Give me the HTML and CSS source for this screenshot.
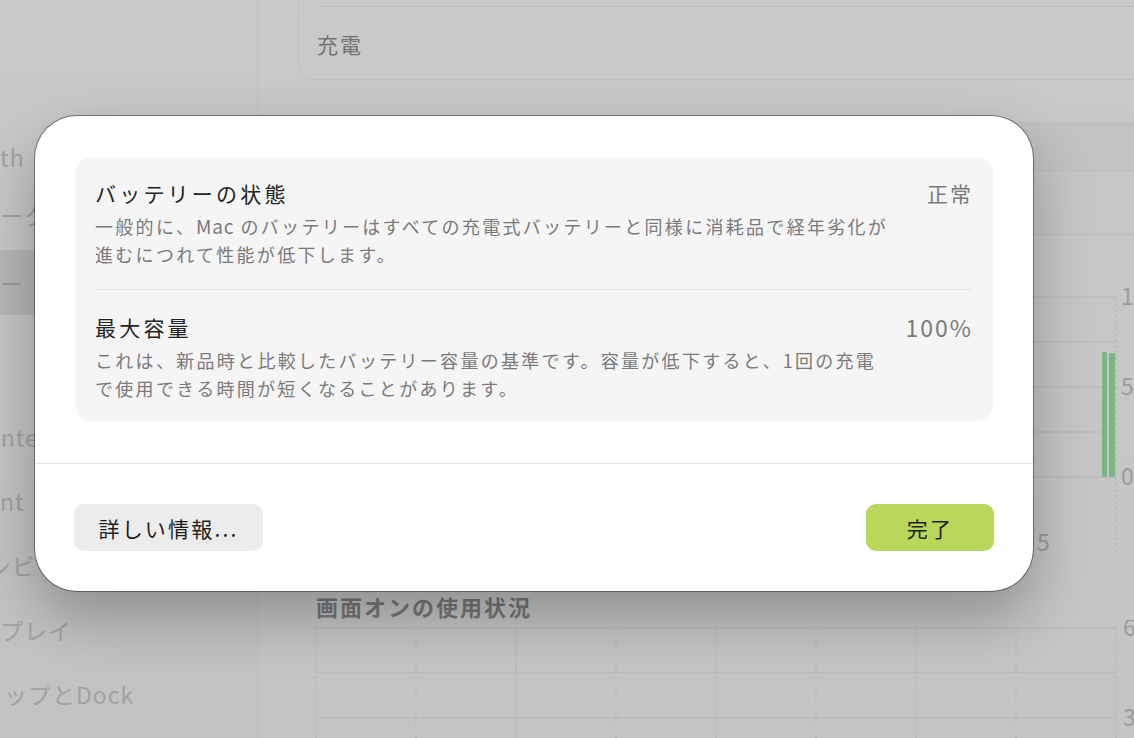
FILE: index.html
```html
<!DOCTYPE html>
<html lang="ja">
<head>
<meta charset="utf-8">
<title>バッテリーの状態</title>
<link rel="stylesheet" href="styles.css">
</head>
<body>
<div class="window">
  <aside class="sidebar">
    <div class="side-item i1"><span>th</span></div>
    <div class="side-item i2"><span>ーク</span></div>
    <div class="side-item i3 selected"><span>ー</span></div>
    <div class="side-item i4"><span class="shift-b">Intelligence</span></div>
    <div class="side-item i5"><span>nt</span></div>
    <div class="side-item i6"><span class="shift-c">シビリティ</span></div>
    <div class="side-item i7"><span>プレイ</span></div>
    <div class="side-item i8"><span class="shift-e">ップとDock</span></div>
  </aside>
  <main class="main">
    <section class="top-card">
      <div class="top-sep"></div>
      <div class="top-label">充電</div>
    </section>
    <section class="seg-card">
      <div class="seg-head"></div>
      <div class="seg-row"></div>
    </section>
    <svg class="chart1" width="836" height="320" viewBox="0 0 836 320">
      <g class="grid-h">
        <line x1="18" y1="57" x2="818" y2="57"/>
        <line x1="18" y1="102" x2="818" y2="102"/>
        <line x1="18" y1="147" x2="818" y2="147"/>
        <line x1="18" y1="192" x2="818" y2="192"/>
        <line x1="18" y1="237" x2="818" y2="237"/>
      </g>
      <line class="grid-v" x1="818" y1="57" x2="818" y2="313"/>
      <rect class="bar" x="804" y="112" width="5" height="125" rx="1"/>
      <rect class="bar" x="811" y="113" width="6" height="124" rx="1"/>
      <text class="axis" x="823" y="65">100%</text>
      <text class="axis" x="823" y="155">50%</text>
      <text class="axis" x="823" y="245">0%</text>
      <text class="axis" x="739" y="311">5</text>
    </svg>
    <h2 class="chart-title">画面オンの使用状況</h2>
    <svg class="chart2" width="836" height="118" viewBox="0 0 836 118">
      <g class="grid-h">
        <line x1="18" y1="8" x2="818" y2="8"/>
        <line x1="18" y1="53" x2="818" y2="53"/>
        <line x1="18" y1="98" x2="818" y2="98"/>
      </g>
      <g class="grid-v">
        <line x1="18" y1="8" x2="18" y2="118"/>
        <line x1="118" y1="8" x2="118" y2="118"/>
        <line x1="318" y1="8" x2="318" y2="118"/>
        <line x1="418" y1="8" x2="418" y2="118"/>
        <line x1="518" y1="8" x2="518" y2="118"/>
        <line x1="618" y1="8" x2="618" y2="118"/>
        <line x1="718" y1="8" x2="718" y2="118"/>
        <line x1="818" y1="8" x2="818" y2="118"/>
      </g>
      <line class="grid-solid" x1="218" y1="8" x2="218" y2="118"/>
      <text class="axis" x="825" y="16">60分</text>
      <text class="axis" x="825" y="106">30分</text>
    </svg>
  </main>
</div>

<div class="dialog" role="dialog">
  <div class="dialog-body">
    <div class="info-card">
      <div class="info-row first">
        <div class="info-text">
          <div class="info-title">バッテリーの状態</div>
          <div class="info-desc">一般的に、<span class="latin">Mac</span> のバッテリーはすべての充電式バッテリーと同様に消耗品で経年劣化が<br>進むにつれて性能が低下します。</div>
        </div>
        <div class="info-value">正常</div>
      </div>
      <div class="info-row second">
        <div class="info-text">
          <div class="info-title">最大容量</div>
          <div class="info-desc">これは、新品時と比較したバッテリー容量の基準です。容量が低下すると、1回の充電<br>で使用できる時間が短くなることがあります。</div>
        </div>
        <div class="info-value num">100%</div>
      </div>
    </div>
  </div>
  <div class="dialog-footer">
    <button class="btn btn-info">詳しい情報...</button>
    <button class="btn btn-done">完了</button>
  </div>
</div>
</body>
</html>
```

FILE: styles.css
```css
* { box-sizing: border-box; }

html, body {
  margin: 0;
  padding: 0;
}

body {
  width: 1134px;
  height: 738px;
  overflow: hidden;
  position: relative;
  background: #c7c7c7;
  font-family: "Noto Sans CJK JP", "Noto Sans", sans-serif;
}

.window {
  display: grid;
  grid-template-columns: 258px 1fr;
  height: 738px;
}

/* ---------- sidebar ---------- */
.sidebar {
  background: linear-gradient(#c9c9c9, #c2c2c2);
  border-right: 1px solid #bfbfbf;
  padding-top: 126px;
  display: flex;
  flex-direction: column;
  overflow: hidden;
}

.side-item {
  display: flex;
  align-items: center;
  font-size: 23px;
  letter-spacing: 1px;
  color: #a2a2a2;
  white-space: nowrap;
}

.i1 { height: 62px; }
.i2 { height: 54px; }
.i3 { height: 65px; margin-top: 8px; }
.i4 { height: 64px; margin-top: 90px; }
.i5 { height: 63px; }
.i6 { height: 65px; }
.i7 { height: 65px; }
.i8 { height: 63px; }

.selected {
  background: #b7b7b7;
  margin-right: 14px;
  border-radius: 0 10px 10px 0;
  color: #9a9a9a;
}

.shift-b { margin-left: -7px; }
.shift-c { margin-left: -12px; }
.shift-e { margin-left: 4px; }

/* ---------- main ---------- */
.main {
  padding-left: 40px;
  display: flex;
  flex-direction: column;
  overflow: hidden;
  background: linear-gradient(#c9c9c9, #c4c4c4);
}

.top-card {
  margin-top: -30px;
  margin-right: -30px;
  height: 110px;
  padding-top: 35px;
  padding-left: 18px;
  background: #c9c9c9;
  border: 1px solid #c1c1c1;
  border-radius: 16px;
}

.top-sep {
  height: 1px;
  background: #bdbdbd;
}

.top-label {
  height: 73px;
  display: flex;
  align-items: center;
  font-size: 21px;
  letter-spacing: 2px;
  color: #727272;
}

.seg-card {
  margin-top: 42px;
  margin-right: -30px;
  height: 113px;
  display: flex;
  flex-direction: column;
}

.seg-head {
  height: 48px;
  background: #c2c2c2;
}

.seg-row {
  flex: 1;
  background: #c6c6c6;
  border-top: 1px solid #bdbdbd;
  border-bottom: 1px solid #bdbdbd;
}

.chart1 {
  display: block;
  margin-top: 5px;
}

.chart2 {
  display: block;
}

.grid-h line {
  stroke: #b6b6b6;
  stroke-width: 1;
}

.grid-v, .grid-v line {
  stroke: #b3b3b3;
  stroke-width: 1;
  stroke-dasharray: 3 3;
}

.grid-solid {
  stroke: #b6b6b6;
  stroke-width: 1;
}

.bar {
  fill: #7bb784;
}

.axis {
  font-family: "Noto Sans CJK JP", "Noto Sans", sans-serif;
  font-size: 23px;
  fill: #9b9b9b;
}

.chart-title {
  margin: 32px 0 0 18px;
  height: 28px;
  line-height: 28px;
  font-size: 22px;
  letter-spacing: 2px;
  font-weight: 700;
  color: #787878;
}

/* ---------- dialog ---------- */
.dialog {
  position: absolute;
  left: 35px;
  top: 116px;
  width: 998px;
  height: 475px;
  background: #ffffff;
  border-radius: 42px;
  box-shadow: 0 0 0 1px rgba(0, 0, 0, 0.4), 0 26px 60px rgba(0, 0, 0, 0.28);
  display: flex;
  flex-direction: column;
  overflow: hidden;
}

.dialog-body {
  padding: 41px 40px 42px 40px;
}

.info-card {
  background: #f5f5f5;
  border-radius: 16px;
  padding: 0 21px 0 20px;
}

.info-row {
  display: flex;
  justify-content: space-between;
  align-items: flex-start;
}

.info-row.first {
  padding: 22px 0 21px;
  border-bottom: 1px solid #e3e3e3;
}

.info-row.second {
  padding: 23px 0 19px;
}

.info-title {
  font-size: 21px;
  line-height: 28px;
  letter-spacing: 3.2px;
  color: #232323;
}

.info-desc {
  margin-top: 5px;
  font-size: 18px;
  line-height: 28px;
  letter-spacing: 2.3px;
  color: #7a7a7a;
  white-space: nowrap;
}

.latin {
  font-size: 19px;
  letter-spacing: 0.8px;
}

.info-value {
  font-size: 21px;
  line-height: 28px;
  letter-spacing: 2px;
  color: #7a7a7a;
  margin-right: -1px;
}

.info-value.num {
  font-size: 23px;
  letter-spacing: 2px;
}

.dialog-footer {
  border-top: 1px solid #e2e2e2;
  padding: 40px 39px 39px 39px;
  display: flex;
  justify-content: space-between;
  align-items: center;
}

.btn {
  height: 47px;
  border: none;
  border-radius: 10px;
  font-family: "Noto Sans CJK JP", "Noto Sans", sans-serif;
  font-size: 21px;
  letter-spacing: 2.2px;
  color: #1e1e1e;
  display: flex;
  align-items: center;
  justify-content: center;
  padding: 0;
}

.btn-info {
  width: 189px;
  background: #ececec;
}

.btn-done {
  width: 128px;
  background: #b9d75b;
}
```
